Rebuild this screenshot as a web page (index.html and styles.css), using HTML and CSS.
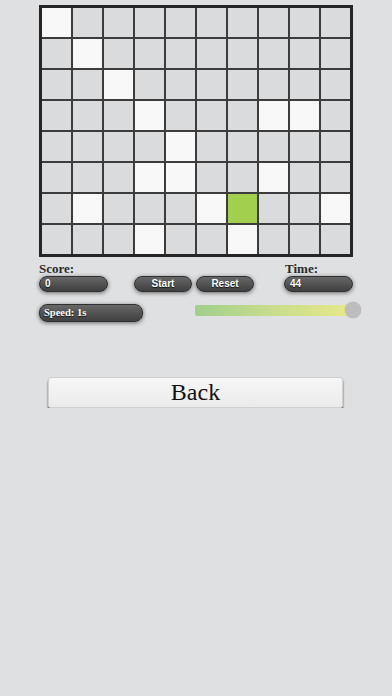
FILE: index.html
```html
<!DOCTYPE html>
<html>
<head>
<meta charset="utf-8">
<link rel="stylesheet" href="styles.css">
</head>
<body>
<div class="page">
  <div class="board">
    <div class="cell w"></div><div class="cell"></div><div class="cell"></div><div class="cell"></div><div class="cell"></div><div class="cell"></div><div class="cell"></div><div class="cell"></div><div class="cell"></div><div class="cell"></div>
    <div class="cell"></div><div class="cell w"></div><div class="cell"></div><div class="cell"></div><div class="cell"></div><div class="cell"></div><div class="cell"></div><div class="cell"></div><div class="cell"></div><div class="cell"></div>
    <div class="cell"></div><div class="cell"></div><div class="cell w"></div><div class="cell"></div><div class="cell"></div><div class="cell"></div><div class="cell"></div><div class="cell"></div><div class="cell"></div><div class="cell"></div>
    <div class="cell"></div><div class="cell"></div><div class="cell"></div><div class="cell w"></div><div class="cell"></div><div class="cell"></div><div class="cell"></div><div class="cell w"></div><div class="cell w"></div><div class="cell"></div>
    <div class="cell"></div><div class="cell"></div><div class="cell"></div><div class="cell"></div><div class="cell w"></div><div class="cell"></div><div class="cell"></div><div class="cell"></div><div class="cell"></div><div class="cell"></div>
    <div class="cell"></div><div class="cell"></div><div class="cell"></div><div class="cell w"></div><div class="cell w"></div><div class="cell"></div><div class="cell"></div><div class="cell w"></div><div class="cell"></div><div class="cell"></div>
    <div class="cell"></div><div class="cell w"></div><div class="cell"></div><div class="cell"></div><div class="cell"></div><div class="cell w"></div><div class="cell g"></div><div class="cell"></div><div class="cell"></div><div class="cell w"></div>
    <div class="cell"></div><div class="cell"></div><div class="cell"></div><div class="cell w"></div><div class="cell"></div><div class="cell"></div><div class="cell w"></div><div class="cell"></div><div class="cell"></div><div class="cell"></div>
  </div>

  <div class="controls">
    <div class="field score">
      <div class="label">Score:</div>
      <div class="pill">0</div>
    </div>
    <div class="buttons">
      <div class="btn">Start</div>
      <div class="btn">Reset</div>
    </div>
    <div class="field time">
      <div class="label">Time:</div>
      <div class="pill">44</div>
    </div>
  </div>

  <div class="speedrow">
    <div class="pill speed">Speed: 1s</div>
    <div class="slider">
      <div class="track"></div>
      <div class="thumb"></div>
    </div>
  </div>

  <div class="back">Back</div>
</div>
</body>
</html>
```

FILE: styles.css
```css
html, body {
  margin: 0;
  padding: 0;
  background: #dfe0e2;
}
body {
  font-family: "Liberation Serif", "Times New Roman", serif;
  color: #222;
}
.page {
  padding: 5px 0 0 39px;
}
.board {
  width: 314px;
  box-sizing: border-box;
  border: 3px solid #262626;
  background: #3c3c3c;
  display: grid;
  grid-template-columns: repeat(10, 1fr);
  grid-auto-rows: 29px;
  gap: 2px;
}
.cell {
  background: #dadbdd;
}
.cell.w {
  background: #f8f8f8;
}
.cell.g {
  background: #a3cf4f;
}
.controls {
  width: 314px;
  margin-top: 4px;
  display: flex;
  align-items: flex-end;
}
.field {
  width: 69px;
  display: flex;
  flex-direction: column;
}
.label {
  font-size: 13px;
  font-weight: bold;
  line-height: 15px;
  color: #2a2a2a;
}
.time .label {
  padding-left: 1px;
}
.buttons {
  display: flex;
  gap: 4px;
  margin-left: 26px;
  margin-right: 30px;
}
.pill, .btn {
  box-sizing: border-box;
  height: 16px;
  border-radius: 8px;
  border: 1px solid #303030;
  background: linear-gradient(#676767, #404040);
  box-shadow: 0 1px 4px rgba(0, 0, 0, 0.55);
  color: #fff;
  font-family: "Liberation Sans", Arial, sans-serif;
  font-weight: bold;
  font-size: 10px;
  line-height: 14px;
  text-shadow: 0 1px 1px #111;
}
.pill {
  padding-left: 5px;
}
.btn {
  width: 58px;
  text-align: center;
}
.speedrow {
  margin-top: 12px;
  display: flex;
  align-items: flex-start;
}
.pill.speed {
  width: 104px;
  height: 18px;
  line-height: 16px;
  font-family: "Liberation Serif", "Times New Roman", serif;
  font-size: 10.5px;
  padding-left: 4px;
}
.slider {
  position: relative;
  width: 166px;
  height: 16px;
  margin-left: 52px;
  margin-top: -2px;
}
.track {
  margin-top: 3px;
  width: 156px;
  height: 11px;
  border-radius: 2px;
  background: linear-gradient(to right, #a0cf8c, #c9dd8c 50%, #e7e88a);
}
.thumb {
  position: absolute;
  right: 0;
  top: 0;
  width: 16px;
  height: 16px;
  border-radius: 50%;
  background: #bdbdc0;
  box-shadow: 0 0 1px rgba(0, 0, 0, 0.25);
}
.back {
  box-sizing: border-box;
  margin: 55px 0 0 9px;
  width: 295px;
  height: 31px;
  border: 1px solid #cfcfcf;
  border-radius: 3px;
  background: linear-gradient(#f6f6f6, #ebebeb);
  box-shadow: 0 3px 2px rgba(0, 0, 0, 0.7);
  text-align: center;
  font-size: 24px;
  line-height: 29px;
  color: #111;
}
```
